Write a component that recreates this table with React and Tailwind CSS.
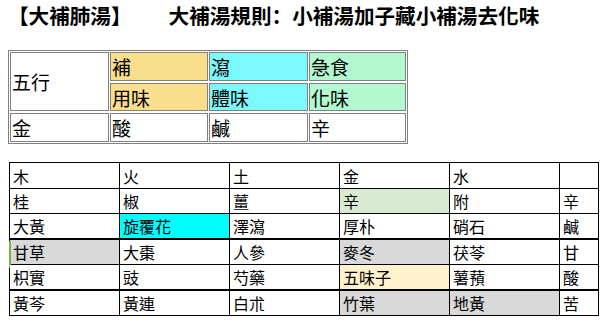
import React from "react";

const F = "font-['Noto_Sans_CJK_TC','Noto_Sans_CJK_SC',sans-serif]";

const rowH = [
  "h-[26px] border-b",
  "h-[25px] border-b",
  "h-[26px] border-b-2",
  "h-[25px] border-b",
  "h-[26px] border-b-2",
  "h-[25px] border-b",
];

const rows = [
  [["木"], ["火"], ["土"], ["金"], ["水"], [""]],
  [["桂"], ["椒"], ["薑"], ["辛", "bg-[#d9ead3]"], ["附"], ["辛"]],
  [["大黃"], ["旋覆花", "bg-[#00ffff]"], ["澤瀉"], ["厚朴"], ["硝石"], ["鹹"]],
  [["甘草", "bg-[#d9d9d9]", true], ["大棗"], ["人參"], ["麥冬", "bg-[#d9d9d9]"], ["茯苓"], ["甘"]],
  [["枳實"], ["豉"], ["芍藥"], ["五味子", "bg-[#fff2cc]"], ["薯蕷"], ["酸"]],
  [["黃芩"], ["黃連"], ["白朮"], ["竹葉", "bg-[#d9d9d9]"], ["地黃", "bg-[#d9d9d9]"], ["苦"]],
];

function TopCell({ children, className = "" }) {
  return (
    <div className={`border border-[#808080] pl-px flex items-center text-[19px] leading-none text-black ${className}`}>
      {children}
    </div>
  );
}

export default function App() {
  return (
    <div className={`${F} bg-white w-[614px] h-[322px] text-black`}>
      <div className="h-[50px] pt-[5px] pl-[8px]">
        <div className="text-[20.6px] leading-[21px] font-bold whitespace-nowrap">
          <span>【大補肺湯】</span>
          <span className="ml-[37px]">
            大補湯規則
            <span className="font-['Noto_Sans_CJK_SC',sans-serif]">：</span>
            小補湯加子藏小補湯去化味
          </span>
        </div>
      </div>

      <div className="ml-[8px] w-[400px] border border-[#808080] p-px grid grid-cols-[99px_98px_99px_97px] grid-rows-[29px_28px_29px] gap-x-px gap-y-[2px]">
        <TopCell className="row-span-2">五行</TopCell>
        <TopCell className="bg-[#f9df8c]">補</TopCell>
        <TopCell className="bg-[#7bf9fb]">瀉</TopCell>
        <TopCell className="bg-[#b2f8d1]">急食</TopCell>
        <TopCell className="bg-[#f9df8c]">用味</TopCell>
        <TopCell className="bg-[#7bf9fb]">體味</TopCell>
        <TopCell className="bg-[#b2f8d1]">化味</TopCell>
        <TopCell>金</TopCell>
        <TopCell>酸</TopCell>
        <TopCell>鹹</TopCell>
        <TopCell>辛</TopCell>
      </div>

      <div className="ml-[9px] mt-[18px] w-[590px] border-l border-t border-black grid grid-cols-[110px_110px_110px_110px_110px_39px]">
        {rows.map((row, ri) =>
          row.map(([text, bg, mark], ci) => (
            <div
              key={`${ri}-${ci}`}
              className={`relative ${rowH[ri]} border-r border-black pl-[3px] flex items-center text-[16px] leading-none ${bg || "bg-white"}`}
            >
              {mark && <span className="absolute left-[-1px] top-[1px] w-[2px] h-[27px] bg-[#7cb342]" />}
              {text}
            </div>
          ))
        )}
      </div>
    </div>
  );
}
